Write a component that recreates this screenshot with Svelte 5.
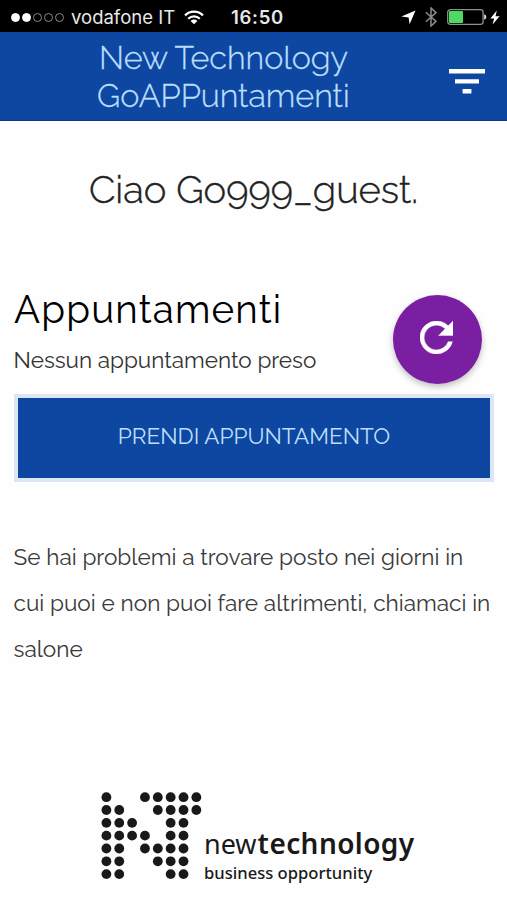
<script lang="ts">
  const carrier = "vodafone IT";
  const time = "16:50";
  const signal = [true, true, false, false, false];

  // one string per row of the logo, "o" is a dot
  const logoRows = [
    "o..ooooo",
    "oo..oooo",
    "ooo..oo.",
    "oooo.oo.",
    "oo.oooo.",
    "oo..ooo.",
    "oo...oo.",
  ];
</script>

<div class="screen">
  <div class="status-bar">
    <div class="signal">
      {#each signal as on}
        <span class="dot" class:on></span>
      {/each}
    </div>
    <span class="carrier">{carrier}</span>
    <svg class="wifi" width="20" height="15" viewBox="0 0 20 15">
      <g fill="none" stroke="#fff" stroke-width="2.2">
        <path d="M1 5.4a12.8 12.8 0 0 1 18 0" />
        <path d="M4.2 8.7a8.3 8.3 0 0 1 11.6 0" />
      </g>
      <path d="M10 14.2 6.6 10.9a4.8 4.8 0 0 1 6.8 0z" fill="#fff" />
    </svg>
    <span class="time">{time}</span>
    <div class="status-icons">
      <svg width="15" height="15" viewBox="0 0 15 15">
        <path d="M14.5.5 8.6 14.3 7.6 7.4.4 6.6z" fill="#fff" />
      </svg>
      <svg class="bluetooth" width="12" height="20" viewBox="0 0 12 20">
        <path
          d="M.8 5.2 11 14.4 6 19V1l5 4.6L.8 14.8"
          fill="none"
          stroke="#8c8c8c"
          stroke-width="1.5"
        />
      </svg>
      <svg class="battery" width="40" height="16" viewBox="0 0 40 16">
        <rect
          x=".7"
          y=".7"
          width="35.4"
          height="14.6"
          rx="2.6"
          fill="none"
          stroke="#8f8f8f"
          stroke-width="1.3"
        />
        <rect x="2" y="2" width="14" height="12" rx="1" fill="#4cd964" />
        <path d="M37.2 5.2q2.2.8 2.2 2.8t-2.2 2.8z" fill="#ddd" />
      </svg>
      <svg class="bolt" width="10" height="15" viewBox="0 0 10 15">
        <path d="M6.8.4.4 8.4h3.7L2.6 14.6 9.6 6.2H5.5z" fill="#fff" />
      </svg>
    </div>
  </div>

  <header>
    <h1>
      <span class="title-first">New Technology</span><br />
      <span>GoAPPuntamenti</span>
    </h1>
    <button class="menu" aria-label="Menu">
      <svg width="36" height="25" viewBox="0 0 36 25">
        <path d="M0 0h36v4.4H0zM6 10.2h24v4.2H6zM13.6 20h8.8v4.4h-8.8z" fill="#fff" />
      </svg>
    </button>
  </header>

  <main>
    <p class="greeting">Ciao Go999_guest.</p>

    <section class="appointments">
      <div>
        <h2>Appuntamenti</h2>
        <p class="empty">Nessun appuntamento preso</p>
      </div>
      <button class="refresh" aria-label="Aggiorna">
        <svg width="33" height="33" viewBox="4 4 16 16">
          <path
            d="M17.65 6.35A7.958 7.958 0 0 0 12 4a8 8 0 1 0 7.73 10h-2.08A5.99 5.99 0 0 1 12 18a6 6 0 1 1 0-12c1.66 0 3.14.69 4.22 1.78L13 11h7V4l-2.35 2.35z"
            fill="#fff"
            stroke="#fff"
            stroke-width=".2"
          />
        </svg>
      </button>
    </section>

    <button class="book">PRENDI APPUNTAMENTO</button>

    <p class="help">
      Se hai problemi a trovare posto nei giorni in<br />
      cui puoi e non puoi fare altrimenti, chiamaci in<br />
      salone
    </p>
  </main>

  <footer>
    <svg width="101" height="88" viewBox="0 0 101 88">
      {#each logoRows as row, y}
        {#each row.split("") as cell, x}
          {#if cell === "o"}
            <circle cx={5.4 + x * 12.85} cy={5.2 + y * 12.82} r="4.9" fill="#191919" />
          {/if}
        {/each}
      {/each}
    </svg>
    <div class="brand">
      <div class="name"><span>new</span><span class="tech">technology</span></div>
      <div class="tagline">business opportunity</div>
    </div>
  </footer>
</div>

<style>
  :global(body) {
    background: #fefefe;
  }

  .screen {
    height: 900px;
    overflow: hidden;
    font-family: Raleway, Lato, sans-serif;
    color: #212121;
  }

  h1,
  h2,
  p {
    margin: 0;
    font-weight: 400;
    white-space: nowrap;
  }

  button {
    padding: 0;
    border: none;
    font-family: inherit;
    cursor: pointer;
  }

  svg {
    display: block;
    flex: none;
  }

  .status-bar {
    display: flex;
    align-items: center;
    box-sizing: border-box;
    height: 32px;
    padding: 2px 7px 0 11px;
    background: #000;
    color: #e8e8e8;
    font-family: Inter, "Liberation Sans", sans-serif;
    white-space: nowrap;
  }

  .signal {
    display: flex;
    gap: 2px;
  }

  .dot {
    box-sizing: border-box;
    width: 9px;
    height: 9px;
    border: 1px solid #8a8a8a;
    border-radius: 50%;
  }

  .dot.on {
    background: #fff;
    border-color: #fff;
  }

  .carrier {
    width: 104px;
    margin-left: 7px;
    font-size: 18.5px;
  }

  .wifi {
    margin-left: 9px;
  }

  .time {
    width: 54px;
    margin-left: 27px;
    font-size: 18.5px;
    font-weight: 600;
    letter-spacing: 0.7px;
  }

  .status-icons {
    display: flex;
    align-items: center;
    margin-left: auto;
  }

  .status-icons svg:first-child {
    margin-right: 2px;
  }

  .bluetooth {
    margin-left: 7px;
  }

  .battery {
    margin-left: 10px;
  }

  .bolt {
    margin-left: 3px;
  }

  header {
    display: flex;
    justify-content: space-between;
    box-sizing: border-box;
    height: 89px;
    padding: 7px 22px 0 97px;
    background: #0d47a1;
    border-bottom: 1px solid #0b3c8c;
  }

  h1 {
    color: #bbdefb;
    font-size: 32.3px;
    font-weight: 300;
    line-height: 38px;
    -webkit-text-stroke: 0.3px #bbdefb;
  }

  .title-first {
    margin-left: 2px;
  }

  .menu {
    align-self: flex-start;
    margin-top: 30px;
    background: none;
  }

  main {
    padding: 46px 13px 0 14px;
  }

  .greeting {
    margin-left: 75px;
    font-size: 38.2px;
    font-weight: 300;
    line-height: 46px;
    -webkit-text-stroke: 0.4px #212121;
  }

  .appointments {
    display: flex;
    justify-content: space-between;
    height: 108px;
    margin-top: 73px;
  }

  h2 {
    margin-top: 1px;
    color: #000;
    font-size: 38.5px;
    letter-spacing: 1.2px;
    line-height: 46px;
  }

  .empty {
    margin: 11px 0 0 -0.5px;
    color: #333;
    font-size: 22.5px;
    line-height: 32px;
  }

  .refresh {
    display: flex;
    align-items: center;
    justify-content: center;
    width: 89px;
    height: 89px;
    margin: 9px 12px 0 0;
    border-radius: 50%;
    background: #7b1fa2;
    box-shadow: 0 3px 6px rgba(0, 0, 0, 0.25);
  }

  .refresh svg {
    margin: -4px 2px 0 0;
  }

  .book {
    display: block;
    box-sizing: border-box;
    width: 480px;
    height: 88px;
    padding-bottom: 4px;
    border: 4px solid #dce6f4;
    background: #0d47a1;
    color: #bbdefb;
    font-size: 22.5px;
  }

  .help {
    margin: 52px 0 0 -0.5px;
    color: #3a3a3a;
    font-size: 22.6px;
    line-height: 46px;
  }

  footer {
    display: flex;
    margin: 120px 0 0 101px;
    font-family: "Noto Sans", sans-serif;
    color: #191919;
    white-space: nowrap;
  }

  .brand {
    padding: 33px 0 0 2px;
  }

  .name {
    font-size: 27px;
    line-height: 36px;
  }

  .tech {
    margin-left: 1px;
    font-size: 28px;
    font-weight: 600;
    letter-spacing: 0.4px;
  }

  .tagline {
    font-size: 16.6px;
    font-weight: 500;
    line-height: 22px;
  }
</style>
